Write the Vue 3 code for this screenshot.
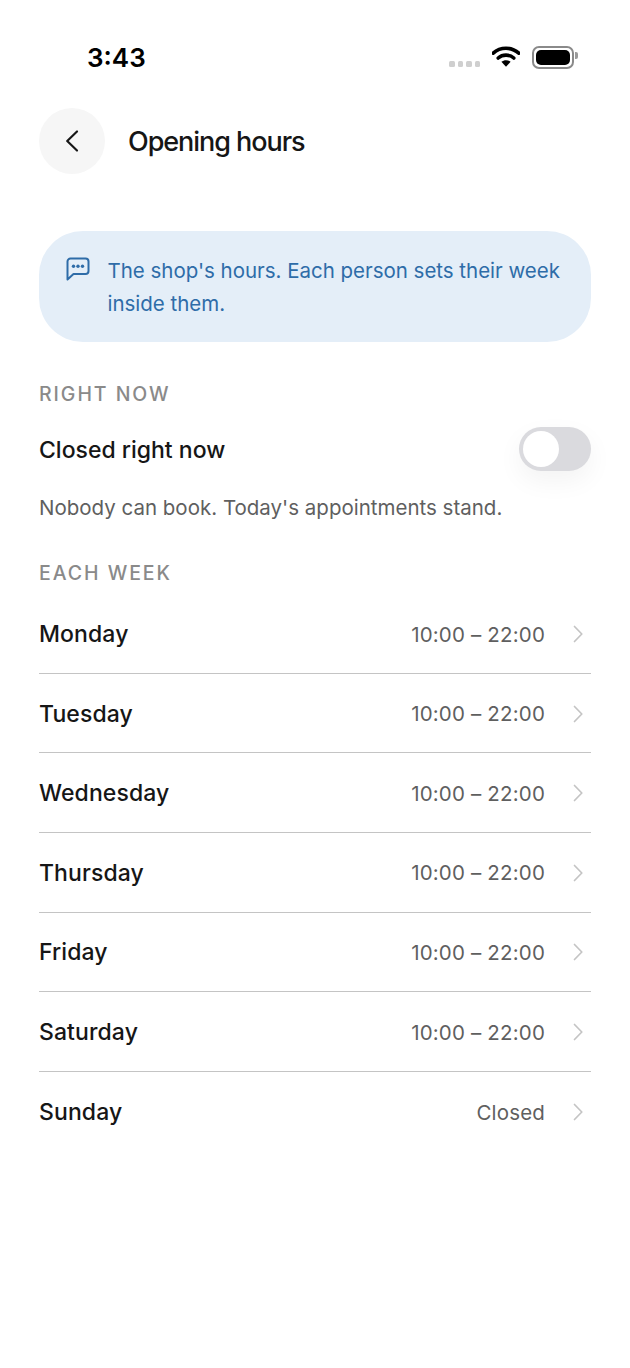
<template>
  <div class="screen">
    <!-- Status bar -->
    <div class="status-bar">
      <span class="clock">3:43</span>
      <div class="status-icons">
        <div class="signal"><i v-for="n in 4" :key="n"></i></div>
        <svg class="wifi" width="28" height="21" viewBox="0 0 28 21">
          <path d="M1.2 7.2C8.4 .6 19.6 .6 26.800 7.200" fill="none" stroke="#000" stroke-width="3.600" stroke-linecap="round" />
          <path d="M6.200 12C10.600 8.100 17.400 8.100 21.800 12" fill="none" stroke="#000" stroke-width="3.600" stroke-linecap="round" />
          <path d="M14 20.800 9.400 15.800C12 13.700 16 13.700 18.600 15.800Z" fill="#000" />
        </svg>
        <div class="battery"><span></span></div>
      </div>
    </div>

    <!-- Header -->
    <header class="top">
      <button class="back" aria-label="Back">
        <svg width="16" height="24" viewBox="0 0 16 24">
          <path d="M13 2.500 3.200 12 13 21.500" fill="none" stroke="#161616" stroke-width="2.200" stroke-linecap="round" stroke-linejoin="round" />
        </svg>
      </button>
      <h1>Opening hours</h1>
    </header>

    <!-- Info note -->
    <div class="note">
      <svg class="note-icon" width="24" height="24" viewBox="0 0 24 24">
        <path d="M1.500 22.500V4.500A3 3 0 0 1 4.500 1.500H19.500A3 3 0 0 1 22.500 4.500V14A3 3 0 0 1 19.500 17H7.500Z" fill="none" stroke="#2e6ca8" stroke-width="2" stroke-linejoin="round" />
        <circle cx="7.500" cy="9.300" r="1.700" fill="#2e6ca8" />
        <circle cx="12" cy="9.300" r="1.700" fill="#2e6ca8" />
        <circle cx="16.500" cy="9.300" r="1.700" fill="#2e6ca8" />
      </svg>
      <p>The shop's hours. Each person sets their week inside them.</p>
    </div>

    <h2 class="section right-now">RIGHT NOW</h2>
    <div class="closed-row">
      <span class="closed-label">Closed right now</span>
      <div class="toggle"><span></span></div>
    </div>
    <p class="hint">Nobody can book. Today's appointments stand.</p>

    <h2 class="section each-week">EACH WEEK</h2>
    <ul class="days">
      <li v-for="day in days" :key="day.name" class="day">
        <span class="day-name">{{ day.name }}</span>
        <span class="day-hours">{{ day.hours }}</span>
        <svg class="chev" width="12" height="20" viewBox="0 0 12 20">
          <path d="M2.500 2.500 9.800 10 2.500 17.500" fill="none" stroke="#c4c4c4" stroke-width="1.700" stroke-linecap="round" stroke-linejoin="round" />
        </svg>
      </li>
    </ul>
  </div>
</template>

<script setup>
const days = [
  { name: 'Monday', hours: '10:00 – 22:00' },
  { name: 'Tuesday', hours: '10:00 – 22:00' },
  { name: 'Wednesday', hours: '10:00 – 22:00' },
  { name: 'Thursday', hours: '10:00 – 22:00' },
  { name: 'Friday', hours: '10:00 – 22:00' },
  { name: 'Saturday', hours: '10:00 – 22:00' },
  { name: 'Sunday', hours: 'Closed' }
]
</script>

<style>
html,
body {
  margin: 0;
  background: #fff;
}
</style>

<style scoped>
.screen {
  width: 630px;
  height: 1368px;
  box-sizing: border-box;
  overflow: hidden;
  padding: 0 39px;
  background: #fff;
  font-family: Inter, "Liberation Sans", sans-serif;
  color: #161616;
}

.status-bar {
  height: 108px;
  box-sizing: border-box;
  padding: 41px 13px 0 48px;
  display: flex;
  justify-content: space-between;
  align-items: flex-start;
}

.clock {
  font-size: 26px;
  line-height: 33px;
  font-weight: 600;
  color: #000;
}

.status-icons {
  display: flex;
  align-items: flex-start;
  margin-top: 5px;
}

.signal {
  display: flex;
  gap: 3px;
  margin-top: 15px;
  margin-right: 12px;
}

.signal i {
  width: 5.500px;
  height: 5.500px;
  border-radius: 1.500px;
  background: #cfcfcf;
}

.wifi {
  margin-right: 12px;
}

.battery {
  position: relative;
  width: 34px;
  height: 15px;
  padding: 2px;
  border: 2px solid #8a8a8a;
  border-radius: 7px;
  margin-top: 0;
  margin-right: 4px;
}

.battery span {
  display: block;
  height: 100%;
  border-radius: 5px;
  background: #000;
}

.battery::after {
  content: "";
  position: absolute;
  right: -6px;
  top: 4px;
  width: 3px;
  height: 7px;
  border-radius: 0 2px 2px 0;
  background: #9a9a9a;
}

.top {
  display: flex;
  align-items: center;
  gap: 23px;
  height: 66px;
}

.back {
  width: 66px;
  height: 66px;
  padding: 0;
  border: none;
  border-radius: 50%;
  background: #f6f6f6;
  display: flex;
  align-items: center;
  justify-content: center;
}

h1 {
  margin: 0;
  font-size: 27px;
  font-weight: 500;
  letter-spacing: -1.050px;
}

.note {
  display: flex;
  gap: 17.500px;
  margin-top: 57px;
  height: 111px;
  box-sizing: border-box;
  padding: 23px 20px 0 27px;
  border-radius: 44px;
  background: #e4eef8;
  color: #2e6ca8;
}

.note-icon {
  flex: none;
  margin-top: 3px;
}

.note p {
  margin: 0;
  font-size: 20.500px;
  line-height: 33px;
  letter-spacing: -0.020px;
}

.section {
  margin: 0;
  font-size: 19.500px;
  line-height: 24px;
  font-weight: 500;
  letter-spacing: 1.950px;
  color: #8a8a8a;
}

.right-now {
  margin-top: 40px;
}

.closed-row {
  display: flex;
  justify-content: space-between;
  align-items: center;
  height: 44px;
  margin-top: 21px;
}

.closed-label {
  font-size: 23px;
  font-weight: 500;
  padding-top: 2px;
}

.toggle {
  position: relative;
  width: 72px;
  height: 44px;
  border-radius: 22px;
  background: #dadade;
  box-shadow: 0 10px 26px rgba(0, 0, 0, 0.05);
}

.toggle span {
  position: absolute;
  left: 4px;
  top: 4px;
  width: 36px;
  height: 36px;
  border-radius: 50%;
  background: #fff;
}

.hint {
  margin: 22px 0 0;
  font-size: 20.500px;
  line-height: 30px;
  color: #5f5f5f;
}

.each-week {
  margin-top: 38px;
}

.days {
  list-style: none;
  margin: 9px 0 0;
  padding: 0;
}

.day {
  display: flex;
  align-items: center;
  height: 79.600px;
  box-sizing: border-box;
  padding-top: 1px;
  border-bottom: 1.500px solid #c4c4c4;
}

.day:first-child {
  height: 79.900px;
  padding-top: 2px;
}

.day:last-child {
  border-bottom: none;
}

.day-name {
  flex: 1;
  font-size: 23px;
  font-weight: 500;
  letter-spacing: 0.100px;
}

.day-hours {
  font-size: 20.500px;
  letter-spacing: 0.170px;
  color: #5f5f5f;
}

.chev {
  margin-left: 27px;
  margin-right: 7px;
}
</style>
